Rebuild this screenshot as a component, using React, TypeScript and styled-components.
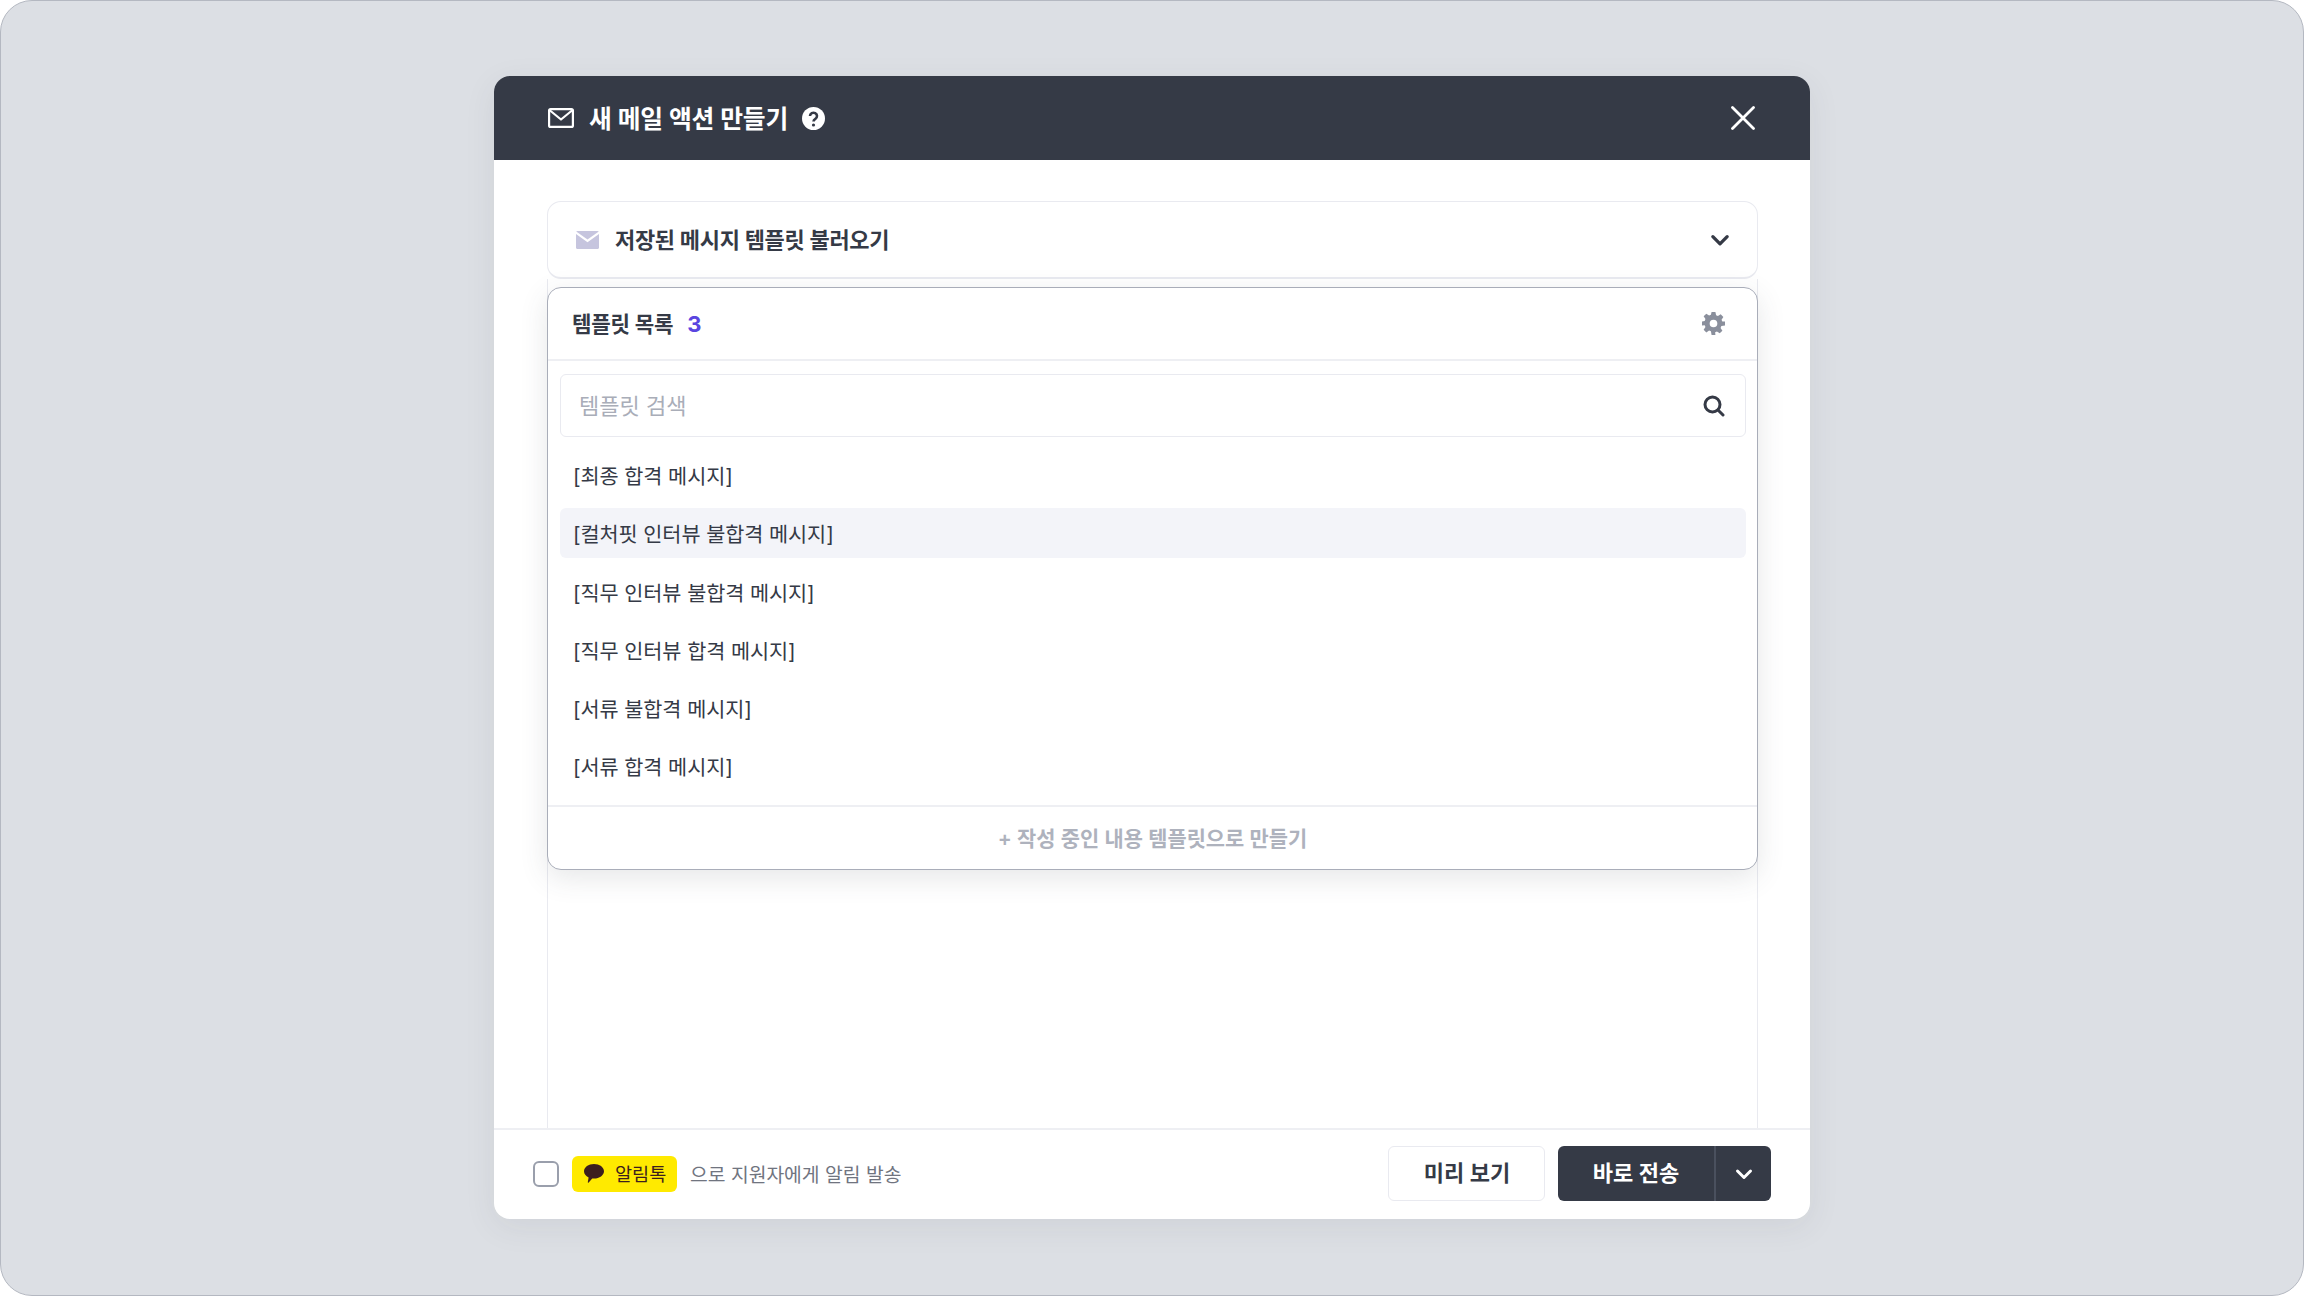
import React from "react";
import styled, { createGlobalStyle } from "styled-components";

/**CSS *******************************************/
const GlobalStyle = createGlobalStyle`
    html, body {
        margin: 0;
        padding: 0;
        background: #fff;
    }
    body {
        font-family: "Inter", "Noto Sans CJK KR", sans-serif;
    }
`;
const Screen = styled.div`
    box-sizing: border-box;
    width: 2304px;
    height: 1296px;
    padding-top: 75px;
    display: flex;
    justify-content: center;
    align-items: flex-start;
    background: #dcdfe4;
    border: 1px solid #b4b8c1;
    border-radius: 32px;
`;
const Modal = styled.div`
    width: 1316px;
    height: 1143px;
    display: flex;
    flex-direction: column;
    background: #fff;
    border-radius: 16px;
    overflow: hidden;
    box-shadow: 0 8px 32px rgba(60, 66, 80, 0.08);
`;
const ModalHeader = styled.div`
    flex: 0 0 84px;
    display: flex;
    align-items: center;
    padding: 0 55px 0 54px;
    background: #353a46;
    color: #fff;
`;
const ModalTitle = styled.h1`
    margin: 0 14px 3px 15px;
    font-size: 24.8px;
    font-weight: 600;
    letter-spacing: -0.2px;
`;
const CloseButton = styled.button`
    margin-left: auto;
    padding: 0;
    display: flex;
    border: 0;
    background: none;
    color: #fff;
`;
const ModalBody = styled.div`
    flex: 1;
    position: relative;
    display: flex;
    flex-direction: column;
    padding: 41px 52px 0 53px;
    min-height: 0;
`;
const TemplateSelect = styled.div`
    box-sizing: border-box;
    height: 78px;
    display: flex;
    align-items: center;
    padding: 0 26px 0 28px;
    border: 1.5px solid #e9eaf0;
    border-bottom-width: 2px;
    border-radius: 14px;
    color: #353a46;
    font-size: 22px;
    font-weight: 600;
    letter-spacing: -0.35px;
`;
const SelectLabel = styled.span`
    margin: 0 0 3px 16px;
    flex: 1;
`;
const EditorArea = styled.div`
    flex: 1;
    border-left: 1px solid #e9eaf0;
    border-right: 1px solid #e9eaf0;
`;
const Dropdown = styled.div`
    position: absolute;
    top: 127px;
    left: 53px;
    box-sizing: border-box;
    width: 1211px;
    height: 583px;
    display: flex;
    flex-direction: column;
    background: #fff;
    border: 1.5px solid #a9adb9;
    border-radius: 14px;
    box-shadow: 0 8px 28px rgba(60, 66, 80, 0.13);
`;
const DropdownHeader = styled.div`
    flex: 0 0 71px;
    display: flex;
    align-items: center;
    padding: 0 32px 0 24px;
    border-bottom: 2px solid #eeeff3;
`;
const DropdownTitle = styled.span`
    margin-bottom: 2px;
    color: #353a46;
    font-size: 21.2px;
    font-weight: 700;
    letter-spacing: -0.2px;
`;
const Count = styled.span`
    margin-left: 14px;
    flex: 1;
    color: #5a45e0;
    font-size: 22px;
    font-weight: 700;
`;
const SearchBox = styled.div`
    box-sizing: border-box;
    height: 63px;
    margin: 13px 11px 13px 12px;
    display: flex;
    align-items: center;
    justify-content: space-between;
    padding: 0 20px 3px 18px;
    border: 1.5px solid #e9eaf0;
    border-radius: 6px;
    color: #a9adb8;
    font-size: 22px;
`;
const SearchIcon = styled.svg`
    margin-top: 3px;
`;
const TemplateList = styled.ul`
    flex: 1;
    margin: 0;
    padding: 0 11px 0 12px;
    list-style: none;
`;
const TemplateItem = styled.li<{ $active?: boolean }>`
    box-sizing: border-box;
    height: 50px;
    margin-bottom: 8.3px;
    display: flex;
    align-items: center;
    padding: 0 13px;
    border-radius: 6px;
    background: ${(props) => (props.$active ? "#f3f4f9" : "transparent")};
    color: #353a46;
    font-size: 20.8px;
    letter-spacing: -0.1px;
`;
const AddTemplate = styled.div`
    flex: 0 0 64px;
    box-sizing: border-box;
    padding-bottom: 3px;
    display: flex;
    align-items: center;
    justify-content: center;
    border-top: 2px solid #eeeff3;
    color: #aeb2bd;
    font-size: 20.9px;
    font-weight: 600;
`;
const ModalFooter = styled.div`
    flex: 0 0 91px;
    box-sizing: border-box;
    display: flex;
    align-items: center;
    padding: 0 39px 2px 39px;
    border-top: 2px solid #eeeff3;
`;
const CheckBox = styled.span`
    box-sizing: border-box;
    width: 26px;
    height: 26px;
    border: 2px solid #9a9fac;
    border-radius: 6px;
`;
const KakaoBadge = styled.span`
    box-sizing: border-box;
    width: 105px;
    height: 36px;
    margin-left: 13px;
    display: flex;
    align-items: center;
    padding-left: 12px;
    gap: 11px;
    background: #ffea00;
    border-radius: 6px;
    color: #3c1e1e;
    font-size: 18.6px;
`;
const BadgeLabel = styled.span`
    margin-bottom: 3px;
`;
const FooterNote = styled.span`
    margin-left: 13px;
    flex: 1;
    color: #70747f;
    font-size: 19.3px;
`;
const PreviewButton = styled.button`
    box-sizing: border-box;
    width: 157px;
    height: 55px;
    padding: 0 0 5px 1px;
    border: 1.5px solid #e9eaf0;
    border-radius: 6px;
    background: #fff;
    color: #353a46;
    font-family: inherit;
    font-size: 22px;
    font-weight: 600;
`;
const SendGroup = styled.div`
    width: 213px;
    height: 55px;
    margin-left: 13px;
    display: flex;
    border-radius: 6px;
    overflow: hidden;
    background: #353a46;
    color: #fff;
`;
const SendButton = styled.button`
    width: 158px;
    padding: 0 0 5px;
    border: 0;
    border-right: 2px solid #4a505e;
    background: none;
    color: inherit;
    font-family: inherit;
    font-size: 22px;
    font-weight: 600;
`;
const SendMore = styled.button`
    flex: 1;
    display: flex;
    align-items: center;
    justify-content: center;
    padding: 0;
    border: 0;
    background: none;
    color: inherit;
`;
/**CSS end****************************************/

const templates = [
    "[최종 합격 메시지]",
    "[컬처핏 인터뷰 불합격 메시지]",
    "[직무 인터뷰 불합격 메시지]",
    "[직무 인터뷰 합격 메시지]",
    "[서류 불합격 메시지]",
    "[서류 합격 메시지]",
];

const Chevron = ({ size, width }: { size: number; width: number }) => (
    <svg width={size} height={size} viewBox="0 0 20 20" fill="none" stroke="currentColor" strokeWidth={width} strokeLinecap="round" strokeLinejoin="round">
        <path d="M3.500 7 10 13.500 16.500 7" />
    </svg>
);

const App = () => {
    return (
        <Screen>
            <GlobalStyle />
            <Modal>
                <ModalHeader>
                    <svg width="26" height="20" viewBox="0 0 26 20" fill="none" stroke="currentColor" strokeWidth="2.2" strokeLinejoin="round" strokeLinecap="round">
                        <rect x="1.1" y="1.1" width="23.8" height="17.8" rx="1.5" />
                        <path d="M2 2.5 13 11.5 24 2.5" />
                    </svg>
                    <ModalTitle>새 메일 액션 만들기</ModalTitle>
                    <svg width="23" height="23" viewBox="0 0 23 23">
                        <circle cx="11.5" cy="11.5" r="11.5" fill="#fff" />
                        <path d="M8 9a3.5 3.3 0 1 1 5.4 2.8c-1.3.8-1.9 1.3-1.9 2.6" fill="none" stroke="#353a46" strokeWidth="2.6" />
                        <circle cx="11.5" cy="18" r="1.6" fill="#353a46" />
                    </svg>
                    <CloseButton>
                        <svg width="24" height="24" viewBox="0 0 24 24" fill="none" stroke="currentColor" strokeWidth="2.8" strokeLinecap="round">
                            <path d="M1.5 1.5 22.5 22.5M22.5 1.5 1.5 22.5" />
                        </svg>
                    </CloseButton>
                </ModalHeader>
                <ModalBody>
                    <TemplateSelect>
                        <svg width="23" height="18" viewBox="0 0 23 18">
                            <path d="M1.500 0h20c.6 0 1 .2 1.300.5L11.500 8.600.2.500C.5.2.9 0 1.500 0Z" fill="#c6c5de" />
                            <path d="M0 3v13.500c0 .9.6 1.500 1.500 1.500h20c.9 0 1.500-.6 1.500-1.500V3L11.500 11.200Z" fill="#c6c5de" />
                        </svg>
                        <SelectLabel>저장된 메시지 템플릿 불러오기</SelectLabel>
                        <Chevron size={22} width={3} />
                    </TemplateSelect>
                    <EditorArea />
                    <Dropdown>
                        <DropdownHeader>
                            <DropdownTitle>템플릿 목록</DropdownTitle>
                            <Count>3</Count>
                            <svg width="23" height="23" viewBox="0 0 24 24" fill="#8a8f9c">
                                <path fillRule="evenodd" d="M10 0h4l.7 3.400 1.900.8 2.900-1.900 2.800 2.800-1.900 2.900.8 1.900L24 10v4l-3.800.7-.8 1.900 1.900 2.900-2.800 2.800-2.900-1.900-1.900.8L14 24h-4l-.7-3.800-1.900-.8-2.900 1.900-2.800-2.800 1.900-2.900-.8-1.900L0 14v-4l2.800-.7.8-1.900-1.900-2.900 2.800-2.800 2.900 1.900 1.900-.8ZM12 8a4 4 0 1 0 0 8 4 4 0 0 0 0-8Z" />
                            </svg>
                        </DropdownHeader>
                        <SearchBox>
                            템플릿 검색
                            <SearchIcon width="22" height="22" viewBox="0 0 22 22" fill="none" stroke="#353a46" strokeWidth="3" strokeLinecap="round">
                                <circle cx="9.5" cy="9.5" r="7.5" />
                                <path d="M15 15 20 20" />
                            </SearchIcon>
                        </SearchBox>
                        <TemplateList>
                            {templates.map((name, index) => (
                                <TemplateItem key={name} $active={index === 1}>{name}</TemplateItem>
                            ))}
                        </TemplateList>
                        <AddTemplate>+ 작성 중인 내용 템플릿으로 만들기</AddTemplate>
                    </Dropdown>
                </ModalBody>
                <ModalFooter>
                    <CheckBox />
                    <KakaoBadge>
                        <svg width="20" height="19" viewBox="0 0 20 19" fill="#3c1e1e">
                            <path d="M10 0c5.500 0 10 3.200 10 7.300s-4.500 7.300-10 7.300c-.6 0-1.200 0-1.800-.1L4.500 18.700c-.4.300-.8 0-.7-.4l.8-4.800C1.800 12.200 0 9.900 0 7.300 0 3.200 4.500 0 10 0Z" />
                        </svg>
                        <BadgeLabel>알림톡</BadgeLabel>
                    </KakaoBadge>
                    <FooterNote>으로 지원자에게 알림 발송</FooterNote>
                    <PreviewButton>미리 보기</PreviewButton>
                    <SendGroup>
                        <SendButton>바로 전송</SendButton>
                        <SendMore><Chevron size={20} width={3} /></SendMore>
                    </SendGroup>
                </ModalFooter>
            </Modal>
        </Screen>
    );
};

export default App;
